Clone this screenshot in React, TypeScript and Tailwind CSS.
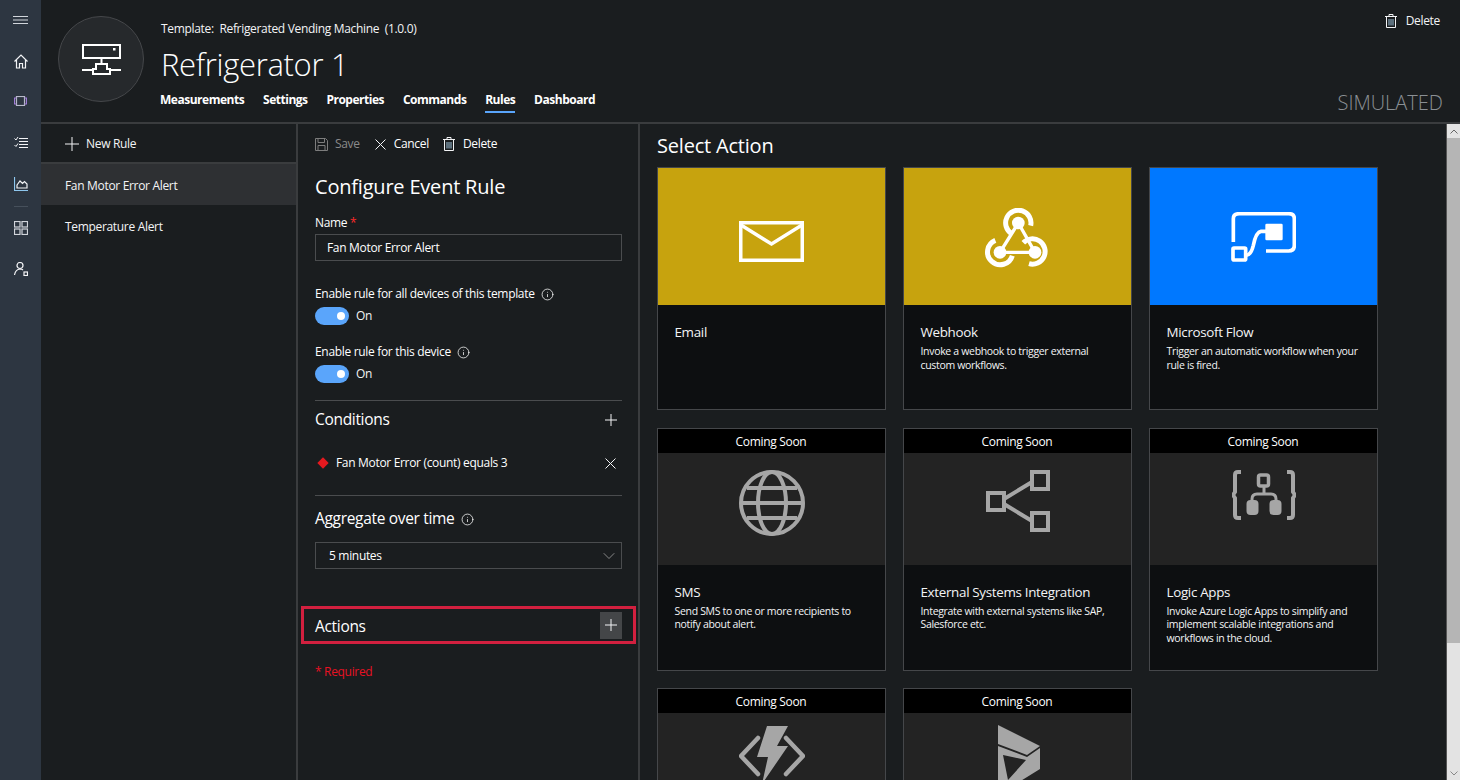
import React from 'react';
import { Info, ChevronDown } from 'lucide-react';

const PlusIcon = ({ size = 12 }: { size?: number }) => (
  <svg width={size} height={size} viewBox="0 0 12 12" fill="none" stroke="#f3f4f6" strokeWidth={12 / size}>
    <path d="M6 0 V12 M0 6 H12" />
  </svg>
);

const CloseIcon = ({ size = 11 }: { size?: number }) => (
  <svg width={size} height={size} viewBox="0 0 11 11" fill="none" stroke="#f3f4f6" strokeWidth="1">
    <path d="M0.5 0.5 L10.5 10.5 M10.5 0.5 L0.5 10.5" />
  </svg>
);

const TrashIcon = () => (
  <svg width="12" height="14" viewBox="0 0 12 14" fill="none" stroke="#f3f4f6" strokeWidth="1">
    <path d="M0 2.5 H12 M4 2.5 V0.5 H8 V2.5 M1.5 2.5 V13.5 H10.5 V2.5" />
    <path d="M4 5 V11.5 M6 5 V11.5 M8 5 V11.5" stroke="#9fc4dc" />
  </svg>
);

const SaveIcon = () => (
  <svg width="13" height="13" viewBox="0 0 13 13" fill="none" stroke="#7d7d7d" strokeWidth="1">
    <path d="M0.5 0.5 H10.5 L12.5 2.5 V12.5 H0.5 Z" />
    <path d="M3 0.5 V4.5 H9.5 V0.5 M3 12.5 V7.5 H10 V12.5" />
  </svg>
);

const EmailIcon = () => (
  <svg width="65" height="41" viewBox="0 0 65 41" fill="none" stroke="#fff" strokeWidth="3.5" className="mt-[10px]">
    <rect x="1.75" y="1.75" width="61.5" height="37.5" />
    <path d="M2 4 L32.5 23 L63 4" />
  </svg>
);

const WebhookIcon = () => (
  <svg width="65" height="60" viewBox="75 35 195 180" fill="none" stroke="#fff" strokeWidth="15" className="mt-[2px]">
    <path d="M212 88 A38 38 0 1 0 155 112" />
    <path d="M106 132 A38 38 0 1 0 157 178" />
    <path d="M207 202 A38 38 0 1 0 190 139" />
    <path d="M175 80 L120 168 H225 L175 80" strokeWidth="10" />
    <circle cx="175" cy="80" r="19" fill="#fff" stroke="none" />
    <circle cx="120" cy="168" r="19" fill="#fff" stroke="none" />
    <circle cx="225" cy="168" r="19" fill="#fff" stroke="none" />
  </svg>
);

const FlowIcon = () => (
  <svg width="65" height="50" viewBox="65 35 195 150" fill="none" stroke="#fff" strokeWidth="11" className="mt-[1px]">
    <path d="M72 125 V55 Q72 40 90 40 H238 Q255 40 255 55 V135 Q255 152 238 152 H170" />
    <rect x="168" y="70" width="52" height="50" rx="4" fill="#fff" stroke="none" />
    <path d="M110 165 Q125 165 132 135 Q140 95 155 93 H170" />
    <rect x="71" y="143" width="38" height="36" rx="3" />
  </svg>
);

const GlobeIcon = () => (
  <svg width="66" height="66" viewBox="0 0 66 66" fill="none" stroke="#a6a6a6" strokeWidth="4">
    <circle cx="33" cy="33" r="31" />
    <ellipse cx="33" cy="33" rx="14" ry="31" />
    <path d="M8 18 H58 M2 33 H64 M8 48 H58" />
  </svg>
);

const ShareIcon = () => (
  <svg width="64" height="62" viewBox="0 0 64 62" fill="none" stroke="#a6a6a6" strokeWidth="4">
    <rect x="2" y="23" width="16" height="17" />
    <rect x="46" y="2" width="16" height="17" />
    <rect x="46" y="43" width="16" height="17" />
    <path d="M18 29 L46 12 M18 34 L46 51" />
  </svg>
);

const LogicAppsIcon = () => (
  <svg width="64" height="50" viewBox="0 0 64 50" fill="none" stroke="#a6a6a6">
    <path strokeWidth="4" d="M9 2 H6 Q3 2 3 5 V22 L1 25 L3 28 V45 Q3 48 6 48 H9" />
    <path strokeWidth="4" d="M55 2 H58 Q61 2 61 5 V22 L63 25 L61 28 V45 Q61 48 58 48 H55" />
    <rect x="26.5" y="5" width="10" height="11" rx="2" strokeWidth="3.5" />
    <path strokeWidth="3" d="M32 16 V24 M20 32 V29 Q20 24 25 24 H39 Q44 24 44 29 V32" />
    <rect x="14.5" y="30" width="12" height="15" rx="4" fill="#a6a6a6" stroke="none" />
    <rect x="37.5" y="30" width="12" height="15" rx="4" fill="#a6a6a6" stroke="none" />
  </svg>
);

const FunctionsIcon = () => (
  <svg width="66" height="58" viewBox="0 0 66 58" fill="#a6a6a6" stroke="none" className="-mt-[4px]">
    <path d="M28 0 H49 L38 20 H49 L23 58 L29 31 H18 Z" />
    <path d="M19 12 L2 30 L19 48" fill="none" stroke="#a6a6a6" strokeWidth="4.5" strokeLinecap="round" strokeLinejoin="round" />
    <path d="M47 12 L64 30 L47 48" fill="none" stroke="#a6a6a6" strokeWidth="4.5" strokeLinecap="round" strokeLinejoin="round" />
  </svg>
);

const DynamicsIcon = () => (
  <svg width="43" height="58" viewBox="0 0 43 58" fill="#a6a6a6" stroke="none" fillRule="evenodd" className="-mt-[5px] ml-[3px]">
    <path d="M0 0 L42 21 L29 30 L0 19 Z" />
    <path d="M0 21 L29 32 L42 23 V44 L0 70 Z M5 30 L28 35 L10 55 Z" />
  </svg>
);

const RefrigeratorIcon = () => (
  <svg width="39" height="31" viewBox="0 0 39 31" fill="none" stroke="#fff" strokeWidth="2">
    <rect x="1" y="1" width="37" height="13" />
    <rect x="31" y="4" width="2.5" height="2.5" fill="#fff" stroke="none" />
    <path d="M0 26 H11 M28 26 H39 M19.5 14 V20 H14 V25 H11 V30 H28 V25 H25 V20 H19.5" />
  </svg>
);

const MenuIcon = () => (
  <svg width="15" height="16" viewBox="0 0 15 16" fill="none" stroke="#d1d5db" strokeWidth="1">
    <path d="M0 4.5 H15 M0 8 H15 M0 11.5 H15" />
  </svg>
);

const HomeIcon = () => (
  <svg width="14" height="15" viewBox="0 0 14 15" fill="none" stroke="#f3f4f6" strokeWidth="1.2">
    <path d="M0.5 7.5 L7 1 L13.5 7.5 M2.5 6 V14 H5.5 V9.5 H8.5 V14 H11.5 V6" />
  </svg>
);

const DeviceIcon = () => (
  <svg width="13" height="10" viewBox="0 0 13 10" fill="none" stroke="#b7b9c9" strokeWidth="1.2">
    <rect x="2.5" y="0.5" width="8" height="9" />
    <path d="M2.5 2 H0.5 V8 H2.5 M10.5 2 H12.5 V8 H10.5" stroke="#a27fd8" />
  </svg>
);

const RulesIcon = () => (
  <svg width="14" height="14" viewBox="0 0 14 14" fill="none" stroke="#f3f4f6" strokeWidth="1.2">
    <path d="M5 2.5 H14 M5 5.5 H14 M5 8.5 H14 M5 11.5 H14" />
    <path d="M0.5 2.5 L2 4 L4 1 M0.5 9 L2 10.5 L4 7.5" strokeWidth="1" />
  </svg>
);

const AnalyticsIcon = () => (
  <svg width="14" height="14" viewBox="0 0 14 14" fill="none" stroke="#8ec7ee" strokeWidth="1.2">
    <path d="M0.5 0 V13.5 H14" />
    <path d="M3 8 L6 4 L8.5 6.5 L10.5 4.5 L13 7 V11 H3 Z" stroke="#f3f4f6" />
  </svg>
);

const DashboardIcon = () => (
  <svg width="14" height="14" viewBox="0 0 14 14" fill="none" stroke="#d1d5db" strokeWidth="1.2">
    <rect x="0.5" y="0.5" width="5.5" height="5.5" />
    <rect x="8" y="0.5" width="5.5" height="5.5" />
    <rect x="0.5" y="8" width="5.5" height="5.5" />
    <rect x="8" y="8" width="5.5" height="5.5" />
  </svg>
);

const AdminIcon = () => (
  <svg width="14" height="14" viewBox="0 0 14 14" fill="none" stroke="#f3f4f6" strokeWidth="1.2">
    <circle cx="6" cy="3.5" r="3" />
    <path d="M0.5 13 Q1.5 7.5 6 7 Q8 7 9 8" />
    <rect x="10" y="10" width="3.5" height="3.5" />
  </svg>
);

const Toggle = () => (
  <div className="flex items-center gap-[7px] mt-[5px]">
    <div className="w-[34px] h-[18px] rounded-full bg-[#5aa5fb] flex items-center justify-end pr-[4px]">
      <div className="w-2 h-2 rounded-full bg-white" />
    </div>
    <span className="text-[12px] text-gray-100">On</span>
  </div>
);

const tabs = ['Measurements', 'Settings', 'Properties', 'Commands', 'Rules', 'Dashboard'];

const topCards = [
  { title: 'Email', desc: '', color: 'bg-[#c7a30e]', icon: <EmailIcon /> },
  { title: 'Webhook', desc: 'Invoke a webhook to trigger external custom workflows.', color: 'bg-[#c7a30e]', icon: <WebhookIcon /> },
  { title: 'Microsoft Flow', desc: 'Trigger an automatic workflow when your rule is fired.', color: 'bg-[#0078ff]', icon: <FlowIcon /> },
];

const soonCards = [
  { title: 'SMS', desc: 'Send SMS to one or more recipients to notify about alert.', icon: <GlobeIcon /> },
  { title: 'External Systems Integration', desc: 'Integrate with external systems like SAP, Salesforce etc.', icon: <ShareIcon /> },
  { title: 'Logic Apps', desc: 'Invoke Azure Logic Apps to simplify and implement scalable integrations and workflows in the cloud.', icon: <LogicAppsIcon /> },
  { title: '', desc: '', icon: <FunctionsIcon /> },
  { title: '', desc: '', icon: <DynamicsIcon /> },
];

const CardBody = ({ title, desc }: { title: string; desc: string }) => (
  <div className="flex-1 bg-[#0d0f11] pl-[16.5px] pr-[17px] pt-[17px]">
    {title && <div className="text-[13.4px] leading-[20px] text-gray-100">{title}</div>}
    {desc && <p className="mt-[3px] text-[10.5px] leading-[13.5px] text-gray-100">{desc}</p>}
  </div>
);

export default function App() {
  return (
    <div
      className="flex w-[1460px] h-[780px] overflow-hidden bg-[#1a1d1f] text-white tracking-[-0.02em]"
      style={{ fontFamily: '"Open Sans", "Noto Sans", sans-serif' }}
    >
      <aside className="w-[41px] shrink-0 bg-[#2d3641] flex flex-col items-center pt-[12px]">
        <MenuIcon />
        <div className="mt-[26px]"><HomeIcon /></div>
        <div className="mt-[27px]"><DeviceIcon /></div>
        <div className="mt-[30px]"><RulesIcon /></div>
        <div className="mt-[27px]"><AnalyticsIcon /></div>
        <div className="w-[14px] h-px bg-[#46505b] mt-[15px]" />
        <div className="mt-[14px]"><DashboardIcon /></div>
        <div className="mt-[27px]"><AdminIcon /></div>
      </aside>

      <div className="flex-1 flex flex-col min-w-0">
        <header className="h-[124px] shrink-0 flex border-b-2 border-[#3a3c3e] pl-[17px] pr-[17px]">
          <div className="w-[86px] h-[86px] mt-[16px] rounded-full bg-[#26292c] border border-[#45474a] flex items-center justify-center shrink-0">
            <RefrigeratorIcon />
          </div>
          <div className="ml-[17px] pt-[21px]">
            <div className="text-[12px] leading-[16px] text-gray-100 whitespace-pre">Template:  Refrigerated Vending Machine  (1.0.0)</div>
            <h1 className="text-[31px] leading-[40px] mt-[7px] font-light text-white">Refrigerator 1</h1>
            <nav className="flex gap-[18.8px] mt-[8px] -ml-px">
              {tabs.map((t) => (
                <div key={t} className={`text-[12px] leading-[16px] font-bold tracking-[-0.04em] pb-[3px] border-b-2 ${t === 'Rules' ? 'border-[#5aa5fb]' : 'border-transparent'}`}>
                  {t}
                </div>
              ))}
            </nav>
          </div>
          <div className="ml-auto flex flex-col items-end pt-[12px] pb-[7px] justify-between">
            <div className="flex items-center gap-[9px] mr-[3px] text-[12px] text-gray-100">
              <TrashIcon />
              Delete
            </div>
            <div className="text-[20px] leading-[24px] font-light text-[#8a8f94] tracking-normal">SIMULATED</div>
          </div>
        </header>

        <div className="flex-1 flex min-h-0">
          <section className="w-[257px] shrink-0 border-r-2 border-[#3a3c3e]">
            <div className="h-[40px] flex items-center gap-[7px] pl-[24px] pt-[1px] text-[12px] text-gray-100 border-b-2 border-[#3a3c3e]">
              <PlusIcon size={14} />
              New Rule
            </div>
            <div className="h-[41px] flex items-center pl-[24px] pt-[2px] text-[12px] bg-[#2e3033] text-gray-100">Fan Motor Error Alert</div>
            <div className="h-[41px] flex items-center pl-[24px] pt-[2px] text-[12px] text-gray-100">Temperature Alert</div>
          </section>

          <section className="w-[342px] shrink-0 border-r-2 border-[#3a3c3e] pl-[17px] pr-[16px] pt-[12px]">
            <div className="flex items-center text-[12px] leading-[16px]">
              <SaveIcon />
              <span className="ml-[7px] text-[#8a8a8a]">Save</span>
              <div className="ml-[15px]"><CloseIcon /></div>
              <span className="ml-[8px]">Cancel</span>
              <div className="ml-[14px]"><TrashIcon /></div>
              <span className="ml-[8px]">Delete</span>
            </div>
            <h2 className="text-[20px] leading-[26px] tracking-[-0.01em] mt-[22px]">Configure Event Rule</h2>
            <div className="mt-[15px] text-[12px] leading-[16px]">
              Name <span className="text-[#ff2a2a]">*</span>
            </div>
            <div className="mt-[3px] h-[27px] border border-[#4a4c4e] flex items-center pl-[11px] pt-[1px] text-[12px]">Fan Motor Error Alert</div>
            <div className="mt-[25px] flex items-center gap-[6px] text-[12px] leading-[16px]">
              Enable rule for all devices of this template
              <Info size={13} strokeWidth={1.4} />
            </div>
            <Toggle />
            <div className="mt-[19px] flex items-center gap-[6px] text-[12px] leading-[16px]">
              Enable rule for this device
              <Info size={13} strokeWidth={1.4} />
            </div>
            <Toggle />
            <div className="mt-[17px] h-px bg-[#4a4c4e]" />
            <div className="flex items-center justify-between h-[38px] text-[15.5px]">
              <span>Conditions</span>
              <div className="mr-[5px]"><PlusIcon /></div>
            </div>
            <div className="flex items-center mt-[6px] h-[36px] text-[12px]">
              <div className="w-[8px] h-[8px] rotate-45 bg-[#e6191f] ml-[4px]" />
              <span className="ml-[9px]">Fan Motor Error (count) equals 3</span>
              <div className="ml-auto mr-[6px]"><CloseIcon /></div>
            </div>
            <div className="mt-[14px] h-px bg-[#4a4c4e]" />
            <div className="flex items-center gap-[6px] mt-[11px] h-[24px] text-[15.5px]">
              Aggregate over time
              <Info size={13} strokeWidth={1.4} />
            </div>
            <div className="mt-[11px] h-[27px] border border-[#4a4c4e] flex items-center justify-between pl-[13px] pr-[2px] text-[12px]">
              <span className="pt-[1px]">5 minutes</span>
              <ChevronDown size={20} strokeWidth={0.9} className="text-[#aaaaaa]" />
            </div>
            <div className="mt-[37px] -mx-[14px] h-[38px] border-[3px] border-[#d2203f] flex items-center justify-between pl-[11px] pr-[11px] text-[15.5px]">
              <span className="pt-[4px]">Actions</span>
              <div className="w-[22px] h-[27px] bg-[#444648] flex items-center justify-center">
                <PlusIcon />
              </div>
            </div>
            <div className="mt-[20px] text-[12px] leading-[16px] text-[#e81123]">* Required</div>
          </section>

          <main className="flex-1 min-w-0 pl-[17px] pt-[7px] overflow-hidden">
            <h2 className="text-[20px] leading-[30px] tracking-[-0.01em]">Select Action</h2>
            <div className="grid grid-cols-[229px_229px_229px] gap-x-[17px] gap-y-[17.5px] mt-[6px]">
              {topCards.map((c) => (
                <div key={c.title} className="h-[243px] flex flex-col border border-[#45474a]">
                  <div className={`h-[137px] shrink-0 flex items-center justify-center ${c.color}`}>{c.icon}</div>
                  <CardBody title={c.title} desc={c.desc} />
                </div>
              ))}
              {soonCards.map((c, i) => (
                <div key={i} className="h-[243px] flex flex-col border border-[#45474a]">
                  <div className="h-[24px] shrink-0 bg-black text-center text-[12px] leading-[25px] pr-[1px]">Coming Soon</div>
                  <div className="h-[112px] shrink-0 bg-[#232323] flex justify-center pt-[17px]">{c.icon}</div>
                  <CardBody title={c.title} desc={c.desc} />
                </div>
              ))}
            </div>
          </main>

          <div className="w-[14px] shrink-0 flex flex-col bg-[#e3e3e3] border-l border-[#555555]">
            <div className="h-[14px] flex items-center justify-center">
              <svg width="8" height="5" viewBox="0 0 8 5" fill="none" stroke="#666" strokeWidth="1"><path d="M0.5 4.5 L4 1 L7.5 4.5" /></svg>
            </div>
            <div className="h-[505px] bg-[#b5b5b5]" />
            <div className="mt-auto h-[14px] flex items-center justify-center">
              <svg width="8" height="5" viewBox="0 0 8 5" fill="none" stroke="#888" strokeWidth="1"><path d="M0.5 0.5 L4 4 L7.5 0.5" /></svg>
            </div>
          </div>
        </div>
      </div>
    </div>
  );
}
